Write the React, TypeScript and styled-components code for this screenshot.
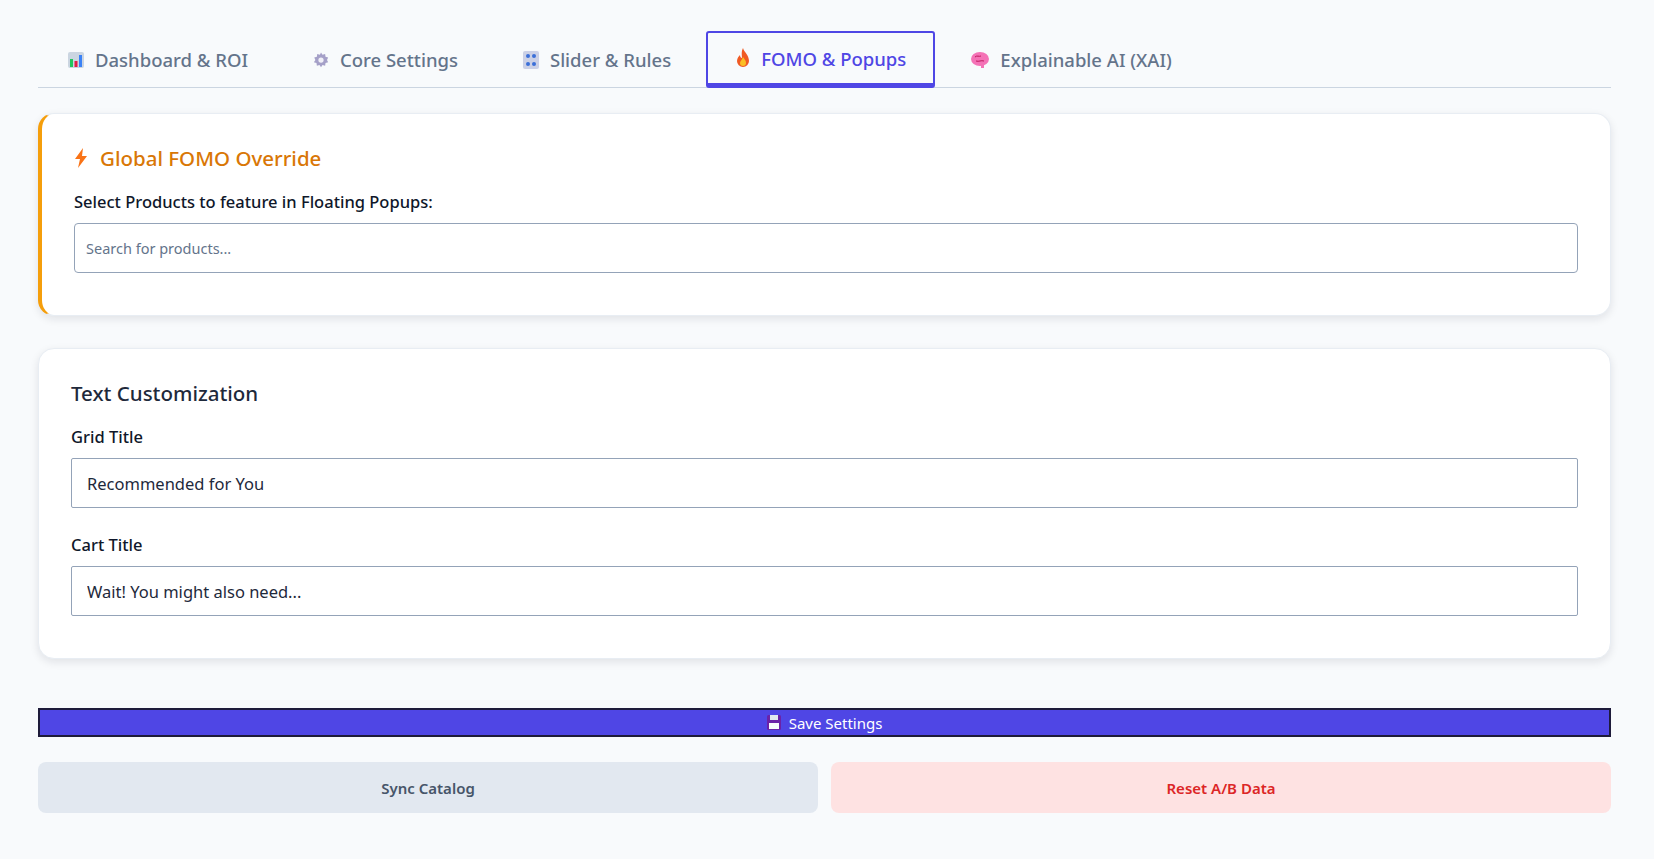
import styled, { createGlobalStyle } from 'styled-components';

const GlobalStyle = createGlobalStyle`
    body {
        margin: 0;
        background: #f8fafc;
        font-family: "Noto Sans", "Open Sans", sans-serif;
        color: #1e293b;
    }
`;

const tabs = [
    { label: 'Dashboard & ROI', icon: 'chart' },
    { label: 'Core Settings', icon: 'gear' },
    { label: 'Slider & Rules', icon: 'knobs' },
    { label: 'FOMO & Popups', icon: 'fire', active: true },
    { label: 'Explainable AI (XAI)', icon: 'brain' },
];

const TabIcon = ({ kind }: { kind: string }) => {
    if (kind === 'chart')
        return (
            <svg width="18" height="18" viewBox="0 0 18 18">
                <rect x="1" y="1" width="16" height="16" rx="2" fill="#cbd5e1" />
                <rect x="3" y="8" width="3" height="8" fill="#22c55e" />
                <rect x="7.5" y="10" width="3" height="6" fill="#e11d48" />
                <rect x="12" y="4" width="3" height="12" fill="#3b82f6" />
            </svg>
        );
    if (kind === 'gear')
        return (
            <svg width="18" height="18" viewBox="0 0 24 24">
                <path d="M12 2l2 3 3.5-1 .5 3.5 3.5 1-1.5 3.5 1.5 3-3.5 1-.5 3.5-3.5-1-2 3-2-3-3.5 1-.5-3.5-3.5-1L4.5 12 3 8.5l3.5-1L7 4l3.5 1z" fill="#a5a0c8" />
                <circle cx="12" cy="12" r="3.5" fill="#f1f0f8" />
            </svg>
        );
    if (kind === 'knobs')
        return (
            <svg width="18" height="18" viewBox="0 0 18 18">
                <rect x="1" y="0" width="16" height="18" rx="2" fill="#cbd0e6" />
                <circle cx="6" cy="5" r="2" fill="#3b6fd8" />
                <circle cx="12" cy="5" r="2" fill="#3b6fd8" />
                <circle cx="6" cy="13" r="2" fill="#3b6fd8" />
                <circle cx="12" cy="13" r="2" fill="#3b6fd8" />
            </svg>
        );
    if (kind === 'fire')
        return (
            <svg width="16" height="20" viewBox="0 0 16 20">
                <path d="M8 0C9 4 14 7 14 13a6 6 0 0 1-12 0c0-3 2-5 3-6 0 2 1 3 2 3C7 7 6 4 8 0z" fill="#f05a24" />
                <path d="M8 9c1 2 3 3 3 6a3 3 0 0 1-6 0c0-2 2-3 3-6z" fill="#fbbf24" />
            </svg>
        );
    return (
        <svg width="20" height="18" viewBox="0 0 20 18">
            <ellipse cx="10" cy="8" rx="9" ry="7" fill="#f472b6" />
            <path d="M5 6c2-2 4 0 6-1M6 10c3 1 5-1 8 0" stroke="#be185d" fill="none" strokeWidth="1" />
            <rect x="11" y="13" width="3" height="4" fill="#f472b6" />
        </svg>
    );
};

const App = () => {
    return (
        <>
            <GlobalStyle />
            <StyledPage>
                <StyledTabBar>
                    {tabs.map((t) => (
                        <StyledTab key={t.label} active={!!t.active}>
                            <TabIcon kind={t.icon} />
                            {t.label}
                        </StyledTab>
                    ))}
                </StyledTabBar>

                <StyledCard accent>
                    <StyledCardTitle color="#d97706">
                        <svg width="14" height="20" viewBox="0 0 14 20">
                            <path d="M9 0L1 11h5l-2 9 9-12H8z" fill="#f97316" />
                        </svg>
                        Global FOMO Override
                    </StyledCardTitle>
                    <StyledLabel bold>Select Products to feature in Floating Popups:</StyledLabel>
                    <StyledInput placeholder="Search for products..." small />
                </StyledCard>

                <StyledCard>
                    <StyledCardTitle color="#1e293b">Text Customization</StyledCardTitle>
                    <StyledLabel>Grid Title</StyledLabel>
                    <StyledInput defaultValue="Recommended for You" />
                    <StyledGap />
                    <StyledLabel>Cart Title</StyledLabel>
                    <StyledInput defaultValue="Wait! You might also need..." />
                </StyledCard>

                <StyledSaveButton>
                    <svg width="14" height="15" viewBox="0 0 14 15">
                        <rect x="0" y="0" width="14" height="15" rx="1.5" fill="#6b21a8" />
                        <rect x="3" y="0" width="8" height="5" fill="#e2e8f0" />
                        <rect x="2" y="8" width="10" height="6" fill="#f8fafc" />
                    </svg>
                    Save Settings
                </StyledSaveButton>

                <StyledActionRow>
                    <StyledActionButton bg="#e2e8f0" fg="#475569">Sync Catalog</StyledActionButton>
                    <StyledActionButton bg="#fee2e2" fg="#dc2626">Reset A/B Data</StyledActionButton>
                </StyledActionRow>
            </StyledPage>
        </>
    );
};

const StyledPage = styled.div`
    padding: 31px 43px 18px 38px;
    display: flex;
    flex-direction: column;
`;

const StyledTabBar = styled.div`
    display: flex;
    gap: 6px;
    border-bottom: 1px solid #cbd5e1;
    margin-bottom: 25px;
`;

const StyledTab = styled.div<{ active: boolean }>`
    display: flex;
    align-items: center;
    gap: 10px;
    height: 57px;
    box-sizing: border-box;
    padding: 0 27px;
    font-size: 18.5px;
    font-weight: 500;
    color: ${({ active }) => (active ? '#4f46e5' : '#64748b')};
    border: ${({ active }) => (active ? '2px solid #4f46e5' : '2px solid transparent')};
    border-bottom: ${({ active }) => (active ? '5px solid #4f46e5' : '2px solid transparent')};
    border-radius: 3px;
    margin-bottom: -1px;
`;

const StyledCard = styled.div<{ accent?: boolean }>`
    background: #ffffff;
    border-radius: 16px;
    border: 1px solid #e8edf3;
    border-left: ${({ accent }) => (accent ? '4px solid #f59e0b' : '1px solid #e8edf3')};
    box-shadow: 0 3px 8px rgba(15, 23, 42, 0.1);
    padding: 30px 32px 42px ${({ accent }) => (accent ? '32px' : '32px')};
    margin-bottom: 32px;
    display: flex;
    flex-direction: column;
`;

const StyledCardTitle = styled.div<{ color: string }>`
    display: flex;
    align-items: center;
    gap: 12px;
    font-size: 20.5px;
    font-weight: 500;
    color: ${({ color }) => color};
    margin-bottom: 18px;
`;

const StyledLabel = styled.div<{ bold?: boolean }>`
    font-size: 16.5px;
    font-weight: 500;
    color: #0f172a;
    margin-bottom: 10px;
`;

const StyledInput = styled.input<{ small?: boolean }>`
    height: 50px;
    box-sizing: border-box;
    border: 1px solid #94a3b8;
    border-radius: ${({ small }) => (small ? '4px' : '2px')};
    padding: 0 ${({ small }) => (small ? '11px' : '15px')};
    font-family: inherit;
    font-size: ${({ small }) => (small ? '14.5px' : '16.5px')};
    color: #1e293b;
    background: #fff;
    &::placeholder {
        color: #64748b;
    }
`;

const StyledGap = styled.div`
    height: 25px;
`;

const StyledSaveButton = styled.div`
    margin-top: 17px;
    height: 29px;
    box-sizing: border-box;
    background: #4f46e5;
    border: 2px solid #1e1b3a;
    color: #ffffff;
    font-size: 15px;
    display: flex;
    align-items: center;
    justify-content: center;
    gap: 8px;
`;

const StyledActionRow = styled.div`
    display: grid;
    grid-template-columns: 1fr 1fr;
    gap: 13px;
    margin-top: 25px;
`;

const StyledActionButton = styled.div<{ bg: string; fg: string }>`
    height: 51px;
    border-radius: 8px;
    background: ${({ bg }) => bg};
    color: ${({ fg }) => fg};
    font-size: 15px;
    font-weight: 600;
    display: flex;
    align-items: center;
    justify-content: center;
`;

export default App;
